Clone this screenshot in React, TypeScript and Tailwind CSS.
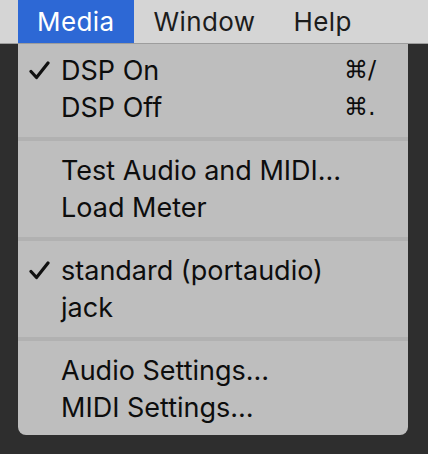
import { Fragment } from "react";

type Item = { label: string; checked?: boolean; shortcut?: string };

const groups: Item[][] = [
  [
    { label: "DSP On", checked: true, shortcut: "⌘/" },
    { label: "DSP Off", shortcut: "⌘." },
  ],
  [{ label: "Test Audio and MIDI…" }, { label: "Load Meter" }],
  [{ label: "standard (portaudio)", checked: true }, { label: "jack" }],
  [{ label: "Audio Settings…" }, { label: "MIDI Settings…" }],
];

const Check = () => (
  <svg width="21" height="19" viewBox="0 0 21 19" className="ml-[11px]">
    <path d="M2 10.5 L7.5 16.5 L19 2" fill="none" stroke="#111" strokeWidth="3.2" strokeLinecap="round" strokeLinejoin="round" />
  </svg>
);

const App = () => {
  return (
    <div className="w-[428px] h-[454px] bg-[#2e2e2e] font-['Inter','DejaVu_Sans',sans-serif] overflow-hidden">
      <div className="h-[44px] bg-[#d5d5d5] border-b border-[#9d9d9d] flex pl-[18px] text-[26px] tracking-[0.4px] text-[#1c1c1c]">
        <div className="pl-[19px] pr-[20px] flex items-center bg-[#2d68d5] text-white">Media</div>
        <div className="px-[19px] flex items-center">Window</div>
        <div className="px-[19px] flex items-center">Help</div>
      </div>
      <div className="mx-[18px] w-[390px] bg-[#bebebe] rounded-b-[8px] pt-[7.5px] pb-[8.5px] text-[27px] text-[#0d0d0d]">
        {groups.map((group, gi) => (
          <Fragment key={gi}>
            {gi > 0 && (
              <div className="h-[25px] flex items-center">
                <div className="w-full h-[4px] bg-[#b1b1b1]" />
              </div>
            )}
            {group.map((item) => (
              <div key={item.label} className="h-[37.5px] leading-[37.5px] flex items-center">
                <div className="w-[43px] flex items-center">{item.checked && <Check />}</div>
                <div className="flex-1">{item.label}</div>
                <div className="w-[64px] font-['DejaVu_Sans',sans-serif] text-[24px]">{item.shortcut}</div>
              </div>
            ))}
          </Fragment>
        ))}
      </div>
    </div>
  );
};

export default App;
